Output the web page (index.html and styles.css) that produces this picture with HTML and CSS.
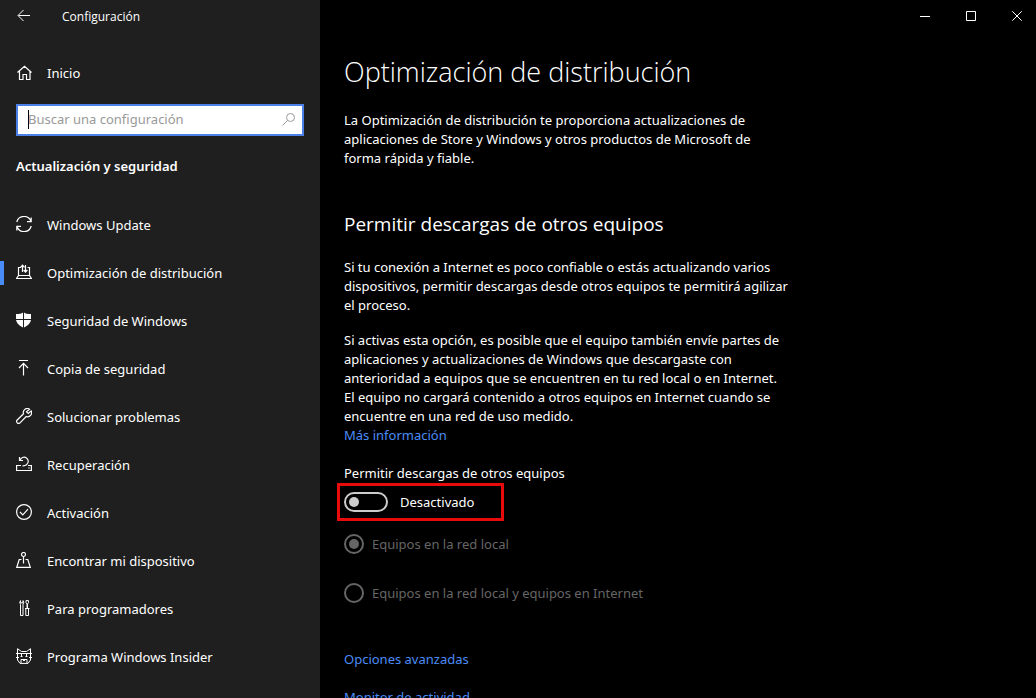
FILE: index.html
```
<!DOCTYPE html>
<html lang="es">
<head>
<meta charset="utf-8">
<meta name="viewport" content="width=device-width, initial-scale=1">
<title>Configuración</title>
<link rel="stylesheet" href="styles.css">
</head>
<body>
<div class="app">
  <aside class="sidebar">
    <header class="titlebar">
      <button class="back" type="button" aria-label="Atrás">
        <svg class="icon" viewBox="0 0 16 16"><path d="M14 7.5H2.500M7.500 2L2 7.500L7.500 13"/></svg>
      </button>
      <span class="app-name">Configuración</span>
    </header>
    <a class="item home" href="#inicio">
      <svg class="icon" viewBox="0 0 16 16"><path d="M1.500 7.500L8.500 1.200L15.500 7.500M3.500 6V14.500H7V9.500H10.500V14.500H14V6"/></svg>
      <span>Inicio</span>
    </a>
    <div class="search">
      <input class="search-input" type="text" aria-label="Buscar una configuración" placeholder="Buscar una configuración">
      <svg class="icon search-icon" viewBox="0 0 16 16"><circle cx="9.500" cy="5.500" r="4"/><path d="M6.500 8.500L1.500 13.500"/></svg>
    </div>
    <h2 class="category">Actualización y seguridad</h2>
    <nav class="nav">
      <a class="item" href="#update">
        <svg class="icon" viewBox="0 0 16 16"><path d="M.8 6A7.400 7.400 0 0 1 15 5.500M15.200 1.500V5.700H11M15.200 10A7.400 7.400 0 0 1 1 10.500M.8 14.500V10.300H5"/></svg>
        <span>Windows Update</span>
      </a>
      <a class="item current" href="#distribucion" aria-current="page">
        <svg class="icon" viewBox="0 0 16 16"><path d="M5 3.500H2.500V11.500M11.500 3.500H13.500V11.500M2.500 11.500L.6 14.500H15.400L13.500 11.500ZM6.500 8V1.500M4.500 3.300L6.500 1.200L8.500 3.300M9.500 1V8M7.700 6L9.500 8L11.400 6"/></svg>
        <span>Optimización de distribución</span>
      </a>
      <a class="item" href="#seguridad">
        <svg class="icon solid" viewBox="0 0 16 16"><path d="M7 0.500Q5 2 0 2V7H7ZM8 .5Q10 2 15 2V7H8ZM0 8H7V15.500Q1 13 0 8ZM8 8H15Q14 13 8 15.500Z"/></svg>
        <span>Seguridad de Windows</span>
      </a>
      <a class="item" href="#copia">
        <svg class="icon" viewBox="0 0 16 16"><path d="M3 .5H12M7.500 15.500V3.500M3 8L7.500 3.300L12 8"/></svg>
        <span>Copia de seguridad</span>
      </a>
      <a class="item" href="#problemas">
        <svg class="icon" viewBox="0 0 16 16"><path d="M13.500 1.200A4 4 0 0 0 7.500 5.800L1.200 12A1.900 1.900 0 0 0 4 14.800L10.200 8.500A4 4 0 0 0 15.200 3L12.300 5.500L10.500 3.800Z"/></svg>
        <span>Solucionar problemas</span>
      </a>
      <a class="item" href="#recuperacion">
        <svg class="icon" viewBox="0 0 16 16"><path d="M5 9.500H.6V14.500H15.400V9.500H12M3.500 1V4.500H7M4 4.300A4.200 4.200 0 1 1 10.500 8.800Q9 10 6.500 9.800M12.300 12H13.700"/></svg>
        <span>Recuperación</span>
      </a>
      <a class="item" href="#activacion">
        <svg class="icon" viewBox="0 0 16 16"><circle cx="8" cy="8" r="7.400"/><path d="M4 8L6.800 10.800L12 5.200"/></svg>
        <span>Activación</span>
      </a>
      <a class="item" href="#encontrar">
        <svg class="icon" viewBox="0 0 16 16"><circle cx="7.500" cy="2.500" r="2"/><path d="M7.500 4.500V11.500M5.500 7.500H3.200L.8 15.300H14.300L11.800 7.500H9.500"/></svg>
        <span>Encontrar mi dispositivo</span>
      </a>
      <a class="item" href="#programadores">
        <svg class="icon thin" viewBox="0 0 16 16"><path d="M4.500 .6Q3 2.500 4.500 4.500V15.500H7V4.500Q8.500 2.500 7 .6V2.800H4.500ZM10 .6H12.500V2.500L11.500 4V8.500M10 .6V2.500L11 4V8.500M9 8.500H13.500M9.800 8.500V15.500H12.500V8.500"/></svg>
        <span>Para programadores</span>
      </a>
      <a class="item" href="#insider">
        <svg class="icon thin" viewBox="0 0 16 16"><path d="M1.500 6V.7L5.500 3.500H10.500L14.500 .7V6M0 5.500H16M0 9.500H3M13 9.500H16M1.500 6V12L4 15.400H12L14.500 12V6M5.500 6V9M10.500 6V9M4.500 8.500H6.500M9.500 8.500H11.500M5 15V11.500H11V15M6.500 11.500H9.500L8 13Z"/></svg>
        <span>Programa Windows Insider</span>
      </a>
    </nav>
  </aside>
  <div class="page">
    <div class="window-controls">
      <button class="window-button" type="button" aria-label="Minimizar"><svg class="glyph" viewBox="0 0 10 10"><path d="M0 5.500H10"/></svg></button>
      <button class="window-button" type="button" aria-label="Maximizar"><svg class="glyph" viewBox="0 0 10 10"><path d="M.5 .5H9.500V9.500H.5Z"/></svg></button>
      <button class="window-button" type="button" aria-label="Cerrar"><svg class="glyph" viewBox="0 0 10 10"><path d="M.3 .3L9.700 9.700M9.700 .3L.3 9.700"/></svg></button>
    </div>
    <main class="content">
      <h1 class="title">Optimización de distribución</h1>
      <p class="text intro">La Optimización de distribución te proporciona actualizaciones de aplicaciones de Store y Windows y otros productos de Microsoft de forma rápida y fiable.</p>
      <h2 class="subtitle">Permitir descargas de otros equipos</h2>
      <p class="text">Si tu conexión a Internet es poco confiable o estás actualizando varios dispositivos, permitir descargas desde otros equipos te permitirá agilizar el proceso.</p>
      <p class="text details">Si activas esta opción, es posible que el equipo también envíe partes de aplicaciones y actualizaciones de Windows que descargaste con anterioridad a equipos que se encuentren en tu red local o en Internet. El equipo no cargará contenido a otros equipos en Internet cuando se encuentre en una red de uso medido.</p>
      <a class="link" href="#mas">Más información</a>
      <label class="switch-label" for="downloads">Permitir descargas de otros equipos</label>
      <div class="switch-row">
        <input class="switch" id="downloads" type="checkbox" role="switch">
        <span>Desactivado</span>
      </div>
      <div class="choices">
        <label class="choice"><input class="radio" type="radio" name="source" checked disabled>Equipos en la red local</label>
        <label class="choice"><input class="radio" type="radio" name="source" disabled>Equipos en la red local y equipos en Internet</label>
      </div>
      <div class="links">
        <a class="link" href="#opciones">Opciones avanzadas</a>
        <a class="link" href="#monitor">Monitor de actividad</a>
      </div>
    </main>
  </div>
</div>
</body>
</html>
```
FILE: styles.css
```
* {
  box-sizing: border-box;
}

body {
  margin: 0;
  background: #000;
  color: #fff;
  font: 13px/19px "Noto Sans", "Open Sans", sans-serif;
}

h1, h2, p {
  margin: 0;
}

a {
  text-decoration: none;
}

button {
  display: flex;
  align-items: center;
  justify-content: center;
  height: 32px;
  padding: 0;
  border: 0;
  background: none;
  color: inherit;
}

.app {
  display: flex;
  height: 100vh;
  overflow: hidden;
}

.sidebar {
  flex: 0 0 320px;
  background: #1f1f1f;
}

.titlebar {
  display: flex;
  align-items: center;
  height: 32px;
}

.back {
  width: 48px;
}

.app-name {
  margin-left: 14px;
  font-family: "Open Sans", "Noto Sans", sans-serif;
  font-size: 12px;
}

.icon,
.glyph {
  flex: none;
  width: 16px;
  height: 16px;
  fill: none;
  stroke: currentColor;
}

.item .icon {
  stroke-width: 1.2;
}

.nav .icon {
  margin-bottom: 2px;
}

.item .thin {
  stroke-width: 1;
}

.glyph {
  width: 10px;
  height: 10px;
}

.item .solid {
  fill: currentColor;
  stroke: none;
}

.item {
  display: flex;
  align-items: center;
  height: 48px;
  color: #fff;
}

.item::before {
  content: "";
  width: 4px;
  height: 24px;
  margin-right: 12px;
}

.item.current::before {
  background: #4a8cf7;
}

.item span {
  margin-left: 15px;
}

.home {
  margin: 17px 0 7px;
}

.search {
  display: flex;
  align-items: center;
  height: 32px;
  margin: 0 16px;
  padding-right: 5px;
  border: 2px solid #4a80e8;
  background: #fff;
  color: #999;
}

.search-input {
  flex: 1;
  min-width: 0;
  height: 28px;
  padding: 0 10px 2px;
  border: 0;
  outline: 0;
  background: linear-gradient(#000, #000) 10px 4px / 1px 19px no-repeat;
  color: #000;
  font: inherit;
}

.search-input::placeholder {
  color: #999;
  opacity: 1;
}

.category {
  margin: 21px 16px 25px;
  font-size: 13px;
  font-weight: 600;
}

.page {
  flex: 1;
  min-width: 0;
}

.window-controls {
  display: flex;
  justify-content: flex-end;
  margin-right: -4px;
}

.window-button {
  width: 46px;
}

.content {
  display: flex;
  flex-direction: column;
  align-items: flex-start;
  padding: 20px 24px;
}

.title {
  font-family: "Open Sans", "Noto Sans", sans-serif;
  font-size: 27px;
  font-weight: 300;
  line-height: 40px;
}

.text {
  max-width: 446px;
}

.intro {
  margin-top: 19px;
}

.subtitle {
  margin: 42px 0 20px;
  font-family: "Open Sans", "Noto Sans", sans-serif;
  font-size: 19px;
  font-weight: 400;
  line-height: 28px;
}

.details {
  margin-top: 16px;
}

.link {
  color: #4a8cf7;
}

.switch-label {
  margin-top: 19px;
}

.switch-row {
  display: flex;
  align-items: center;
  gap: 12px;
  height: 38px;
  margin: 0 0 0 -7px;
  padding: 0 27px 0 4px;
  border: 3px solid #e80b0b;
}

.switch {
  appearance: none;
  display: flex;
  align-items: center;
  width: 44px;
  height: 20px;
  margin: 0;
  padding: 0 3px;
  border: 2px solid #ccc;
  border-radius: 10px;
}

.switch::before {
  content: "";
  width: 10px;
  height: 10px;
  border-radius: 50%;
  background: #ccc;
}

.choices {
  display: grid;
  gap: 29px;
  margin-top: 13px;
}

.choice {
  display: flex;
  align-items: center;
  gap: 8px;
  height: 20px;
  color: #666;
}

.radio {
  appearance: none;
  display: grid;
  place-items: center;
  width: 20px;
  height: 20px;
  margin: 0;
  border: 2px solid #666;
  border-radius: 50%;
}

.radio:checked::before {
  content: "";
  width: 10px;
  height: 10px;
  border-radius: 50%;
  background: #666;
}

.links {
  display: grid;
  gap: 19px;
  margin-top: 47px;
}
```
